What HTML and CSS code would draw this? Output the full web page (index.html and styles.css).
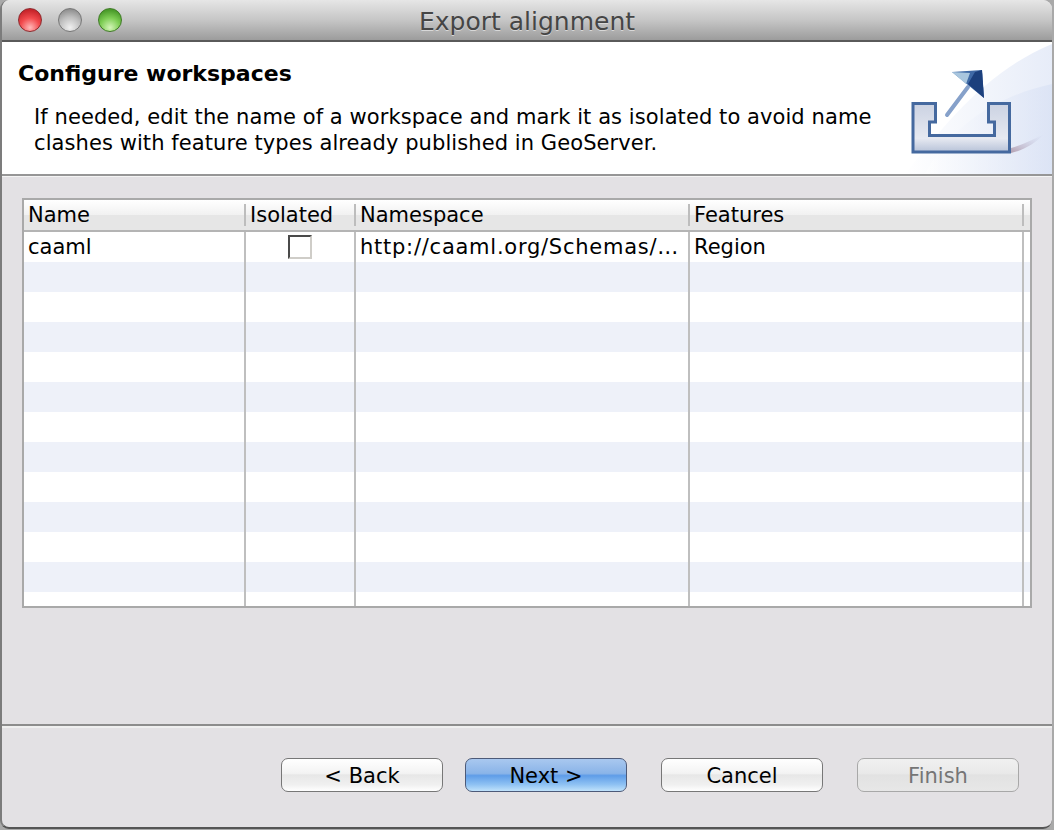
FILE: index.html
```html
<!DOCTYPE html>
<html lang="en">
<head>
	<meta charset="UTF-8">
	<title>Export alignment</title>
	<link rel="stylesheet" href="styles.css">
</head>
<body>
<main class="window">
	<div class="titlebar">
		<div class="lights">
			<span class="light red"></span>
			<span class="light gray"></span>
			<span class="light green"></span>
		</div>
		<div class="title">Export alignment</div>
	</div>

	<header class="banner">
		<div class="banner-text">
			<h1>Configure workspaces</h1>
			<p>If needed, edit the name of a workspace and mark it as isolated to avoid name clashes with feature types already published in GeoServer.</p>
		</div>
		<svg class="banner-art" width="150" height="132" viewBox="902 42 150 132">
			<defs>
				<linearGradient id="swoosh" x1="0" y1="0" x2="1" y2="0">
					<stop offset="0" stop-color="#ffffff"/>
					<stop offset="1" stop-color="#d3ddf3"/>
				</linearGradient>
				<linearGradient id="tray" x1="0" y1="0" x2="0" y2="1">
					<stop offset="0" stop-color="#cbd2e2"/>
					<stop offset="0.72" stop-color="#e6e9f1"/>
					<stop offset="1" stop-color="#b7c2d8"/>
				</linearGradient>
				<linearGradient id="shadow" x1="0" y1="1" x2="1" y2="0">
					<stop offset="0" stop-color="#b49fb0"/>
					<stop offset="1" stop-color="#c9d3ee" stop-opacity="0"/>
				</linearGradient>
				<filter id="soft">
					<feGaussianBlur stdDeviation="0.5"/>
				</filter>
			</defs>
			<path d="M905 174C945 125 985 72 1052 44V174Z" fill="url(#swoosh)" opacity="0.55"/>
			<path d="M925 174C950 125 1000 95 1052 84V174Z" fill="url(#swoosh)" opacity="0.55"/>
			<path d="M1011 153V148C1022 145 1032 140 1044 134C1036 143 1024 150 1011 153Z" fill="url(#shadow)"/>
			<g filter="url(#soft)">
				<path d="M913 103.500H935.500V122H929.500V135.500H994.500V122H988.500V103.500H1009.500V152H913Z" fill="url(#tray)" stroke="#44699f" stroke-width="3"/>
				<path d="M947 115L968 87" stroke="#86a1ca" stroke-width="4" stroke-linecap="round"/>
				<path d="M952 72L982 70L984 98Z" fill="#3f6aa6"/>
				<path d="M952 72L970 73L966 84Z" fill="#a9c6de"/>
				<path d="M982 70L984 98L968 84L975 72Z" fill="#1d3f7d"/>
			</g>
		</svg>
	</header>

	<section class="content">
		<table class="grid">
			<colgroup>
				<col class="col-name">
				<col class="col-isolated">
				<col class="col-namespace">
				<col class="col-features">
				<col>
			</colgroup>
			<thead>
				<tr>
					<th>Name</th>
					<th>Isolated</th>
					<th>Namespace</th>
					<th>Features</th>
					<th></th>
				</tr>
			</thead>
			<tbody>
				<tr>
					<td>caaml</td>
					<td class="center"><span class="check"></span></td>
					<td class="url">http://caaml.org/Schemas/…</td>
					<td>Region</td>
					<td></td>
				</tr>
				<tr><td></td><td></td><td></td><td></td><td></td></tr>
				<tr><td></td><td></td><td></td><td></td><td></td></tr>
				<tr><td></td><td></td><td></td><td></td><td></td></tr>
				<tr><td></td><td></td><td></td><td></td><td></td></tr>
				<tr><td></td><td></td><td></td><td></td><td></td></tr>
				<tr><td></td><td></td><td></td><td></td><td></td></tr>
				<tr><td></td><td></td><td></td><td></td><td></td></tr>
				<tr><td></td><td></td><td></td><td></td><td></td></tr>
				<tr><td></td><td></td><td></td><td></td><td></td></tr>
				<tr><td></td><td></td><td></td><td></td><td></td></tr>
				<tr><td></td><td></td><td></td><td></td><td></td></tr>
				<tr class="last"><td></td><td></td><td></td><td></td><td></td></tr>
			</tbody>
		</table>
	</section>

	<footer class="buttons">
		<button type="button" class="btn">&lt; Back</button>
		<button type="button" class="btn primary">Next &gt;</button>
		<button type="button" class="btn cancel">Cancel</button>
		<button type="button" class="btn finish" disabled>Finish</button>
	</footer>
</main>
</body>
</html>
```

FILE: styles.css
```css
html, body {
	margin: 0;
	height: 100%;
}

body {
	background: #a9a9a9;
	font-family: "DejaVu Sans", "Liberation Sans", sans-serif;
	font-size: 21px;
	color: #000;
}

.window {
	box-sizing: border-box;
	width: 1052px;
	height: 829px;
	display: flex;
	flex-direction: column;
	background: #e3e1e4;
	border-left: 2px solid #7c7c7c;
	border-bottom: 2px solid #555;
	border-radius: 9px;
	overflow: hidden;
}

/* title bar */
.titlebar {
	flex: none;
	height: 40px;
	display: flex;
	align-items: center;
	background: linear-gradient(#e6e6e6, #c6c6c6 50%, #9c9c9c);
	border-bottom: 2px solid #5a5a5a;
}

.lights {
	flex: none;
	width: 0;
	display: flex;
	gap: 16px;
	padding-left: 16px;
	margin-right: -16px;
}

.light {
	flex: none;
	width: 22px;
	height: 22px;
	border: 1px solid #666;
	border-radius: 50%;
}

.red {
	border-color: #8c2a2e;
	background: radial-gradient(circle at 50% 85%, #ffb9b9, #f24a4d 45%, #c8252b 80%);
}

.gray {
	border-color: #777;
	background: radial-gradient(circle at 50% 85%, #f0f0f0, #bdbdbd 50%, #8e8e8e 85%);
}

.green {
	border-color: #3f7a26;
	background: radial-gradient(circle at 50% 85%, #d4f5b8, #7fce55 45%, #4b9c2b 80%);
}

.title {
	flex: 1;
	padding-top: 2px;
	text-align: center;
	font-size: 25px;
	color: #454545;
	text-shadow: 0 1px 0 #d8d8d8;
}

/* banner */
.banner {
	flex: none;
	height: 132px;
	display: flex;
	background: #fff;
	border-bottom: 2px solid #969696;
	box-shadow: 0 1px 0 #f4f4f4;
}

.banner-text {
	flex: 1;
	min-width: 0;
	padding: 18px 0 0 16px;
}

.banner h1 {
	margin: 0;
	font-size: 22px;
	line-height: 28px;
	font-weight: bold;
}

.banner p {
	margin: 16px 0 0 16px;
	width: 850px;
	line-height: 26px;
	letter-spacing: 0.08px;
}

.banner-art {
	flex: none;
	display: block;
}

/* table */
.content {
	flex: 1;
	padding: 22px 20px 0;
}

.grid {
	width: 1010px;
	height: 410px;
	table-layout: fixed;
	border-collapse: separate;
	border-spacing: 0;
	border: 2px solid #a9a9a9;
	background: #fff;
}

.col-name {
	width: 222px;
}

.col-isolated {
	width: 110px;
}

.col-namespace,
.col-features {
	width: 334px;
}

.grid th {
	height: 30px;
	padding: 0 0 0 4px;
	text-align: left;
	font-weight: normal;
	background: linear-gradient(#fff, #f1f1f1 50%, #e6e6e6 50%, #e6e6e6);
	border-bottom: 2px solid #b4b4b4;
	background-clip: padding-box;
	position: relative;
}

.grid th:not(:last-child)::after {
	content: "";
	position: absolute;
	top: 4px;
	bottom: 4px;
	right: 0;
	width: 2px;
	background: #bdbdbd;
}

.grid td {
	height: 30px;
	padding: 0 0 0 4px;
	overflow: hidden;
	white-space: nowrap;
	border-right: 2px solid #bfbfbf;
}

.grid td:last-child {
	border-right: 0;
}

.grid td.url {
	letter-spacing: 0.75px;
}

.grid tbody tr:nth-child(even) {
	background: #eef1f9;
}

.grid tr.last td {
	height: 14px;
}

.center {
	text-align: center;
}

.check {
	display: inline-block;
	box-sizing: border-box;
	width: 24px;
	height: 24px;
	vertical-align: middle;
	margin: -2px 0 0 -5px;
	background: #fff;
	border: 2px solid;
	border-color: #4a4a4a #cfcdc8 #cfcdc8 #4a4a4a;
}

/* bottom buttons */
.buttons {
	flex: none;
	height: 103px;
	box-sizing: border-box;
	display: flex;
	align-items: flex-start;
	padding: 32px 0 0 279px;
	border-top: 2px solid #8c8c8c;
	box-shadow: inset 0 2px 0 #efefef;
}

.btn {
	box-sizing: border-box;
	width: 162px;
	height: 34px;
	margin-right: 22px;
	padding: 2px 0 0;
	font-family: inherit;
	font-size: 21px;
	color: #000;
	background: linear-gradient(#fff, #f3f3f3 45%, #e7e7e7 50%, #f0f0f0 80%, #fff);
	border: 1px solid #777;
	border-radius: 7px;
}

.primary {
	margin-right: 34px;
	background: linear-gradient(#a9c8ef, #8ab4e8 45%, #5f9de8 52%, #8fc2f3 80%, #c0e2fb);
	border-color: #4d5a78;
}

.cancel {
	margin-right: 34px;
}

.finish {
	color: #757575;
	background: linear-gradient(#f0f0f0, #e9e9e9 45%, #e2e2e2 50%, #e7e7e7);
	border-color: #a8a8a8;
}
```
